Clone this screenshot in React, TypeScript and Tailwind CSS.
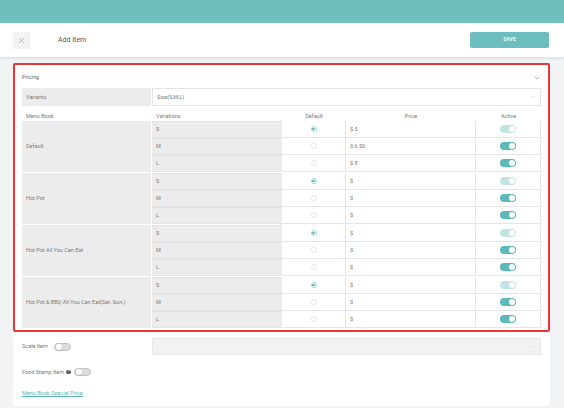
import { X, ChevronDown } from 'lucide-react'

interface Group {
  name: string
  prices: string[]
}

const groups: Group[] = [
  { name: 'Default', prices: ['$ 5', '$ 6.50', '$ 8'] },
  { name: 'Hot Pot', prices: ['$', '$', '$'] },
  { name: 'Hot Pot All You Can Eat', prices: ['$', '$', '$'] },
  { name: 'Hot Pot & BBQ All You Can Eat(Sat.-Sun.)', prices: ['$', '$', '$'] },
]

const sizes = ['S', 'M', 'L']

function Radio({ checked }: { checked: boolean }) {
  if (checked) {
    return (
      <div className="w-[6px] h-[6px] rounded-full border border-[#9ad6d6] flex items-center justify-center">
        <div className="w-[2.5px] h-[2.5px] rounded-full bg-[#5ab5b5]" />
      </div>
    )
  }
  return <div className="w-[6px] h-[6px] rounded-full border border-[#e8e8e8] bg-white" />
}

function Toggle({ on, dim }: { on: boolean; dim?: boolean }) {
  if (!on) {
    return (
      <div className="w-[17px] h-[8px] rounded-full bg-[#dcdcdc] border border-[#c4c4c4] flex items-center px-[1px]">
        <div className="w-[6px] h-[6px] rounded-full bg-white shadow-sm" />
      </div>
    )
  }
  return (
    <div
      className={
        dim
          ? 'w-[16px] h-[8px] rounded-full bg-[#c3e4e4] flex items-center justify-end px-[1px]'
          : 'w-[16px] h-[8px] rounded-full bg-[#5db8b8] flex items-center justify-end px-[1px]'
      }
    >
      <div className="w-[6px] h-[6px] rounded-full bg-white" />
    </div>
  )
}

export default function App() {
  return (
    <div
      className="w-[564px] h-[408px] bg-[#f2f3f5] overflow-hidden text-[#7a7a7a]"
      style={{ fontFamily: 'Roboto, "Liberation Sans", sans-serif' }}
    >
      {/* Top bar */}
      <div className="h-[23px] bg-[#6fbfbf]" />

      {/* Header */}
      <div className="h-[35px] bg-white flex items-center justify-between pl-[13px] pr-[15px] shadow-[0_1px_2px_rgba(0,0,0,0.08)] border-b border-[#e6e6e6]">
        <div className="flex items-center">
          <div className="w-[17px] h-[17px] bg-[#f2f3f5] flex items-center justify-center">
            <X size={9} strokeWidth={1.3} className="text-[#8a8a8a]" />
          </div>
          <span className="ml-[28px] text-[7px] text-[#555]">Add Item</span>
        </div>
        <button className="w-[79px] h-[16px] bg-[#6dbfbf] rounded-[2px] text-white text-[5px] font-medium tracking-wide">
          SAVE
        </button>
      </div>

      {/* Card */}
      <div className="mx-[13px] mr-[14px] mt-[5px] bg-white rounded-[2px] pb-[9px]">
        {/* Pricing section */}
        <div className="border-2 border-[#ee3535] rounded-[2px] px-[7px] pb-[2px]">
          <div className="h-[23px] flex items-center justify-between pt-[2px]">
            <span className="text-[5.5px] text-[#666]">Pricing</span>
            <ChevronDown size={8} strokeWidth={1.5} className="text-[#777]" />
          </div>

          <div className="h-[18px] flex gap-px">
            <div className="w-[129px] bg-[#ececec] flex items-center pl-[4px] text-[5.5px]">Variants</div>
            <div className="flex-1 border border-[#e6e6e6] bg-white flex items-center justify-between pl-[4px] pr-[4px] text-[5.5px]">
              <span>Size(S,M,L)</span>
              <ChevronDown size={6} strokeWidth={1.3} className="text-[#999]" />
            </div>
          </div>

          {/* Column headings */}
          <div className="h-[15px] flex items-end pb-[1px] text-[5.5px]">
            <div className="w-[130px] pl-[4px]">Menu Book</div>
            <div className="w-[130px] pl-[4px]">Variations</div>
            <div className="w-[64px] text-center">Default</div>
            <div className="w-[130px] text-center">Price</div>
            <div className="flex-1 text-center">Active</div>
          </div>

          {/* Rows */}
          <div className="flex flex-col gap-px">
            {groups.map((g) => (
              <div key={g.name} className="flex gap-px text-[5.5px]">
                <div className="w-[129px] bg-[#ececec] flex items-center pl-[4px]">{g.name}</div>
                <div className="flex-1 flex flex-col">
                  {sizes.map((s, i) => (
                    <div key={s} className="h-[17px] flex border-b border-[#e6e6e6]">
                      <div className="w-[130px] bg-[#ececec] flex items-center pl-[4px] border-t border-[#e3e3e3]">{s}</div>
                      <div className="w-[64px] flex items-center justify-center border-r border-[#e6e6e6]">
                        <Radio checked={i === 0} />
                      </div>
                      <div className="w-[130px] flex items-center pl-[4px] border-r border-[#e6e6e6]">{g.prices[i]}</div>
                      <div className="flex-1 flex items-center justify-center border-r border-[#e6e6e6]">
                        <Toggle on dim={i === 0} />
                      </div>
                    </div>
                  ))}
                </div>
              </div>
            ))}
          </div>
        </div>

        {/* Scale item */}
        <div className="px-[9px] mt-[6px] flex items-center h-[17px]">
          <div className="w-[130px] flex items-center text-[5.5px]">
            <span>Scale Item</span>
            <span className="ml-[6px]">
              <Toggle on={false} />
            </span>
          </div>
          <div className="flex-1 h-[17px] bg-[#f2f2f2] border border-[#e6e6e6] flex items-center justify-end pr-[4px]">
            <ChevronDown size={6} strokeWidth={1.2} className="text-[#bbb]" />
          </div>
        </div>

        {/* Food stamp */}
        <div className="px-[9px] mt-[13px] flex items-center text-[5.5px] h-[8px]">
          <span>Food Stamp Item</span>
          <span className="ml-[2px] w-[4.5px] h-[4.5px] rounded-full bg-[#555] text-white text-[3.5px] flex items-center justify-center font-bold">
            ?
          </span>
          <span className="ml-[3px]">
            <Toggle on={false} />
          </span>
        </div>

        <div className="px-[9px] mt-[13px] text-[5.5px]">
          <span className="text-[#5ab8b8] underline">Menu Book Special Price</span>
        </div>
      </div>
    </div>
  )
}
